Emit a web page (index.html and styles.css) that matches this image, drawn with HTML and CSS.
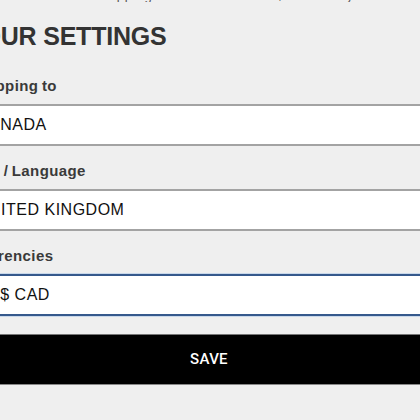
FILE: index.html
```html
<!DOCTYPE html>
<html lang="en">
<head>
<meta charset="utf-8">
<title>Your Settings</title>
<link rel="stylesheet" href="styles.css">
</head>
<body>
<div class="topstrip"><span>Free standard shipping on all orders over $150 &nbsp; Easy returns &nbsp; Customer service help</span></div>
<main class="panel">
  <h1 class="title">YOUR SETTINGS</h1>
  <div class="field first">
    <div class="label">Shipping to</div>
    <div class="box">CANADA</div>
  </div>
  <div class="field">
    <div class="label">Site / Language</div>
    <div class="box">UNITED KINGDOM</div>
  </div>
  <div class="field">
    <div class="label">Currencies</div>
    <div class="box focus">CA$ CAD</div>
  </div>
  <button class="save">SAVE</button>
</main>
</body>
</html>
```

FILE: styles.css
```css
html, body {
  margin: 0;
  padding: 0;
  background: #efefef;
  overflow: hidden;
  width: 420px;
  height: 420px;
}
body {
  font-family: "Liberation Sans", Arial, sans-serif;
  color: #333;
}
.topstrip {
  height: 2px;
  overflow: hidden;
}
.topstrip span {
  display: block;
  margin-top: -10px;
  margin-left: 2px;
  font-size: 13px;
  line-height: 12px;
  color: #555;
  white-space: nowrap;
  letter-spacing: 0.8px;
}
.panel {
  margin-left: -35px;
  width: 488px;
  display: flex;
  flex-direction: column;
}
.title {
  margin: 18.6px 0 0 0;
  font-size: 25px;
  line-height: 30px;
  font-weight: 700;
  color: #333;
  letter-spacing: -0.2px;
}
.field {
  display: flex;
  flex-direction: column;
  gap: 8px;
  margin-top: 15px;
}
.field.first {
  margin-top: 25px;
}
.label {
  padding-left: 6px;
  font-size: 15px;
  line-height: 20px;
  font-weight: 700;
  color: #3a3a3a;
  letter-spacing: 0.4px;
  word-spacing: -1px;
}
.box {
  box-sizing: border-box;
  height: 42px;
  background: #fff;
  border-top: 2px solid #a3a3a3;
  border-bottom: 2px solid #a3a3a3;
  display: flex;
  align-items: center;
  padding-left: 12px;
  font-size: 16px;
  letter-spacing: 0.5px;
  color: #111;
}
.box.focus {
  border-top-color: #36598c;
  border-bottom-color: #36598c;
  box-shadow: 0 -1px 0 #c9d8ea, 0 1px 0 #c9d8ea;
}
.save {
  margin-top: 18px;
  height: 51px;
  box-sizing: border-box;
  background: #000;
  border: none;
  border-top: 1px solid #777;
  border-bottom: 1px solid #888;
  color: #fff;
  font-family: Roboto, "Liberation Sans", Arial, sans-serif;
  font-weight: 500;
  font-size: 15px;
  letter-spacing: 0.3px;
  padding: 0;
}
```
